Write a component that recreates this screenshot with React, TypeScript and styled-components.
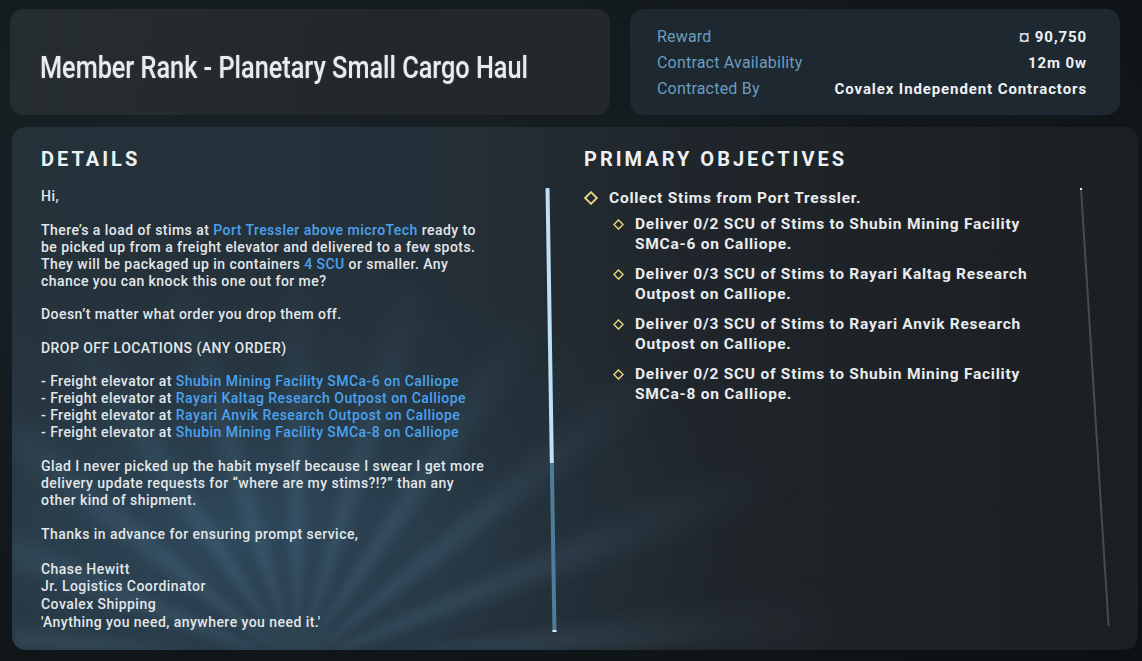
import React from "react";
import styled, { createGlobalStyle } from "styled-components";

const Global = createGlobalStyle`
  html, body { margin: 0; padding: 0; background: #101619; }
  body { width: 1142px; height: 661px; overflow: hidden; font-family: Roboto, "Liberation Sans", sans-serif; }
`;

const Page = styled.div`
  width: 1142px;
  height: 661px;
  box-sizing: border-box;
  padding: 9px 4px 11px 10px;
  display: flex;
  flex-direction: column;
  gap: 12px;
  background: radial-gradient(ellipse at 20% 30%, #1a2328 0%, #11171a 60%, #0c1114 100%);
`;

const TopRow = styled.div`
  display: flex;
  gap: 20px;
  height: 106px;
`;

const TitleCard = styled.div`
  width: 600px;
  border-radius: 14px;
  background: linear-gradient(100deg, #262d31 0%, #22272b 60%, #23282c 100%);
  display: flex;
  align-items: center;
  padding: 10px 0 0 30px;
  box-sizing: border-box;
  overflow: hidden;
`;

const Title = styled.h1`
  margin: 0;
  display: inline-block;
  white-space: nowrap;
  font-family: Roboto, "Liberation Sans", sans-serif;
  font-weight: 500;
  font-size: 31px;
  color: #e8ecef;
  transform: scaleX(0.815);
  transform-origin: left center;
  text-shadow: 0 0 2px rgba(255,255,255,0.25);
`;

const InfoCard = styled.div`
  width: 490px;
  border-radius: 14px;
  background: #1d2830;
  box-sizing: border-box;
  padding: 18px 33px 0 27px;
  display: flex;
  flex-direction: column;
  gap: 4px;
`;

const InfoRow = styled.div`
  display: flex;
  justify-content: space-between;
  align-items: baseline;
  height: 22px;
`;

const InfoLabel = styled.span`
  font-family: Roboto, sans-serif;
  font-size: 16px;
  color: #6c9dbf;
  letter-spacing: 0.2px;
`;

const InfoValue = styled.span`
  font-family: Roboto, sans-serif;
  font-weight: 700;
  font-size: 15px;
  color: #eef1f3;
  letter-spacing: 0.9px;
`;

const MainPanel = styled.div`
  position: relative;
  margin-left: 2px;
  height: 523px;
  border-radius: 14px;
  overflow: hidden;
  display: grid;
  grid-template-columns: 560px 1fr;
  background:
    radial-gradient(ellipse 60% 70% at 20% 78%, rgba(52, 88, 114, 0.6) 0%, rgba(40, 64, 82, 0.28) 45%, rgba(0,0,0,0) 75%),
    linear-gradient(90deg, #26323a 0%, #25313a 35%, #1f252a 62%, #1c1f22 100%);
  &::before {
    content: "";
    position: absolute;
    left: 0;
    right: 0;
    bottom: 0;
    height: 100%;
    background: repeating-conic-gradient(from 270deg at 285px 103%,
      rgba(130, 180, 215, 0) 0deg,
      rgba(130, 180, 215, 0.2) 5deg,
      rgba(130, 180, 215, 0) 10deg,
      rgba(130, 180, 215, 0) 17deg);
    -webkit-mask-image: radial-gradient(ellipse 50% 75% at 25% 100%, #000 0%, rgba(0,0,0,0.55) 50%, transparent 100%);
    mask-image: radial-gradient(ellipse 50% 75% at 25% 100%, #000 0%, rgba(0,0,0,0.55) 50%, transparent 100%);
    filter: blur(4px);
    pointer-events: none;
  }
`;

const Column = styled.div<{ $pl: number }>`
  position: relative;
  z-index: 1;
  padding: 21px 0 0 ${(p) => p.$pl}px;
  display: flex;
  flex-direction: column;
  min-height: 0;
`;

const Heading = styled.h2`
  margin: 0;
  font-family: Roboto, sans-serif;
  font-weight: 700;
  font-size: 20px;
  letter-spacing: 3px;
  color: #eef1f3;
  height: 22px;
  line-height: 22px;
`;

const DetailsBody = styled.div`
  display: flex;
  margin-top: 18px;
  flex: 1;
  padding-bottom: 24px;
`;

const Letter = styled.div`
  width: 446px;
  font-family: Roboto, sans-serif;
  font-weight: 500;
  font-size: 14px;
  letter-spacing: 0.45px;
  color: #e3e7ea;
  white-space: nowrap;
`;

const Para = styled.div<{ $gap?: number; $lh?: number }>`
  margin: 0 0 ${(p) => p.$gap ?? 16.6}px 0;
  line-height: ${(p) => p.$lh ?? 17}px;
`;

const Line = styled.div``;

const Link = styled.span`
  color: #4aa2ee;
`;

const ScrollTrack = styled.div`
  width: 4px;
  margin-left: 62px;
  display: flex;
  flex-direction: column;
  transform: skewX(0.9deg);
`;

const ScrollThumb = styled.div`
  height: 275px;
  background: #bfe0f7;
  border-radius: 1px 1px 0 0;
`;

const ScrollRest = styled.div`
  flex: 1;
  background: #4f7c9a;
  border-bottom: 2px solid #e0eef8;
`;

const ObjBody = styled.div`
  display: flex;
  margin-top: 18px;
  flex: 1;
  padding-bottom: 24px;
`;

const ObjList = styled.div`
  width: 496px;
  display: flex;
  flex-direction: column;
`;

const ObjItem = styled.div<{ $sub?: boolean }>`
  display: flex;
  align-items: flex-start;
  gap: 11px;
  margin-left: ${(p) => (p.$sub ? 29 : 0)}px;
  margin-bottom: ${(p) => (p.$sub ? 10 : 6)}px;
  font-family: Roboto, sans-serif;
  font-weight: 700;
  font-size: 15.5px;
  line-height: 20px;
  color: #e9edf0;
  letter-spacing: 0.75px;
`;

const ObjText = styled.div`
  width: 425px;
`;

const Diamond = styled.svg<{ $s: number }>`
  flex: none;
  width: ${(p) => p.$s}px;
  height: ${(p) => p.$s}px;
  margin-top: ${(p) => (20 - p.$s) / 2}px;
`;

const ThinTrack = styled.div`
  width: 2px;
  background: #444c52;
  border-top: 2px solid #f0f0f0;
  transform-origin: top;
  transform: skewX(3.6deg);
`;

const DiamondIcon = ({ s }: { s: number }) => (
  <Diamond $s={s} viewBox="0 0 12 12">
    <path d="M6 1 L11 6 L6 11 L1 6 Z" fill="none" stroke="#e8d47c" strokeWidth="1.6" />
  </Diamond>
);

const objectives: [string, string][] = [
  ["Deliver 0/2 SCU of Stims to Shubin Mining Facility", "SMCa-6 on Calliope."],
  ["Deliver 0/3 SCU of Stims to Rayari Kaltag Research", "Outpost on Calliope."],
  ["Deliver 0/3 SCU of Stims to Rayari Anvik Research", "Outpost on Calliope."],
  ["Deliver 0/2 SCU of Stims to Shubin Mining Facility", "SMCa-8 on Calliope."],
];

const dropOffs = [
  "Shubin Mining Facility SMCa-6 on Calliope",
  "Rayari Kaltag Research Outpost on Calliope",
  "Rayari Anvik Research Outpost on Calliope",
  "Shubin Mining Facility SMCa-8 on Calliope",
];

export default function App() {
  return (
    <>
      <Global />
      <Page>
        <TopRow>
          <TitleCard>
            <Title>Member Rank - Planetary Small Cargo Haul</Title>
          </TitleCard>
          <InfoCard>
            <InfoRow>
              <InfoLabel>Reward</InfoLabel>
              <InfoValue>¤ 90,750</InfoValue>
            </InfoRow>
            <InfoRow>
              <InfoLabel>Contract Availability</InfoLabel>
              <InfoValue>12m 0w</InfoValue>
            </InfoRow>
            <InfoRow>
              <InfoLabel>Contracted By</InfoLabel>
              <InfoValue>Covalex Independent Contractors</InfoValue>
            </InfoRow>
          </InfoCard>
        </TopRow>
        <MainPanel>
          <Column $pl={29}>
            <Heading>DETAILS</Heading>
            <DetailsBody>
              <Letter>
                <Para>Hi,</Para>
                <Para>
                  <Line>
                    There’s a load of stims at <Link>Port Tressler above microTech</Link> ready to
                  </Line>
                  <Line>be picked up from a freight elevator and delivered to a few spots.</Line>
                  <Line>
                    They will be packaged up in containers <Link>4 SCU</Link> or smaller. Any
                  </Line>
                  <Line>chance you can knock this one out for me?</Line>
                </Para>
                <Para>Doesn’t matter what order you drop them off.</Para>
                <Para>DROP OFF LOCATIONS (ANY ORDER)</Para>
                <Para>
                  {dropOffs.map((d) => (
                    <Line key={d}>
                      - Freight elevator at <Link>{d}</Link>
                    </Line>
                  ))}
                </Para>
                <Para>
                  <Line>Glad I never picked up the habit myself because I swear I get more</Line>
                  <Line>delivery update requests for “where are my stims?!?” than any</Line>
                  <Line>other kind of shipment.</Line>
                </Para>
                <Para $gap={18}>Thanks in advance for ensuring prompt service,</Para>
                <Para $gap={0} $lh={17.8}>
                  <Line>Chase Hewitt</Line>
                  <Line>Jr. Logistics Coordinator</Line>
                  <Line>Covalex Shipping</Line>
                  <Line>'Anything you need, anywhere you need it.'</Line>
                </Para>
              </Letter>
              <ScrollTrack>
                <ScrollThumb />
                <ScrollRest />
              </ScrollTrack>
            </DetailsBody>
          </Column>
          <Column $pl={12}>
            <Heading>PRIMARY OBJECTIVES</Heading>
            <ObjBody>
              <ObjList>
                <ObjItem>
                  <DiamondIcon s={14} />
                  <ObjText>Collect Stims from Port Tressler.</ObjText>
                </ObjItem>
                {objectives.map(([a, b]) => (
                  <ObjItem $sub key={a + b}>
                    <DiamondIcon s={11} />
                    <ObjText>
                      <Line>{a}</Line>
                      <Line>{b}</Line>
                    </ObjText>
                  </ObjItem>
                ))}
              </ObjList>
              <ThinTrack />
            </ObjBody>
          </Column>
        </MainPanel>
      </Page>
    </>
  );
}
